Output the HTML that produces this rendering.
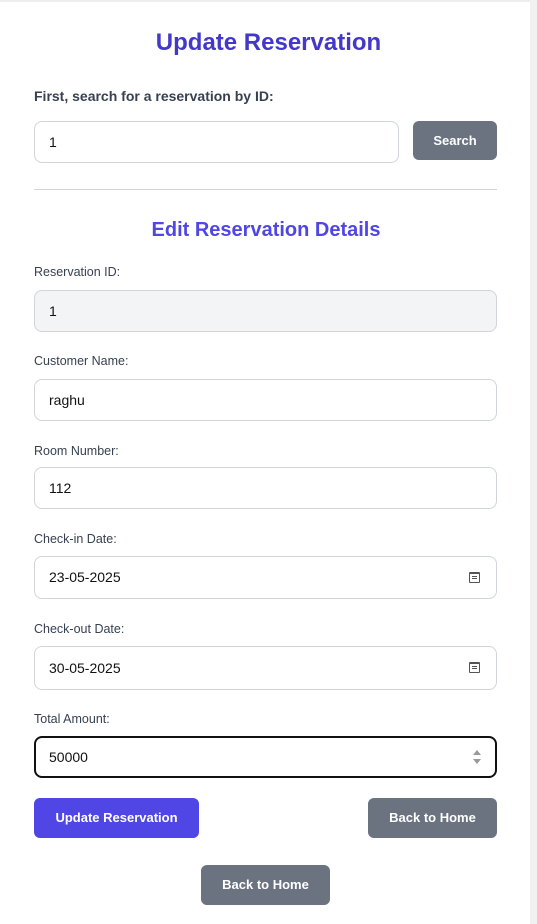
<!DOCTYPE html><html><head><style>
body{margin:0;width:537px;height:924px;background:#fff;font-family:"Liberation Sans",sans-serif;position:relative;overflow:hidden}
.sb{position:absolute;left:530px;top:0;width:7px;height:924px;background:#f1f1f1}
.top{position:absolute;left:0;top:0;width:530px;height:2px;background:#eee}
.a{position:absolute}
h1{position:absolute;left:0;width:537px;top:29px;margin:0;text-align:center;font-size:24px;color:#4338ca}
h2{position:absolute;left:0;width:532px;top:219px;margin:0;text-align:center;font-size:20px;color:#4f46e5}
.lb{position:absolute;left:34px;font-size:12.5px;color:#374151}
.in{position:absolute;left:34px;width:461px;height:40px;border:1px solid #d1d5db;border-radius:8px;box-sizing:content-box;font-size:14px;color:#111;line-height:40px;text-indent:14px}
.btn{position:absolute;height:40px;border-radius:6px;background:#6b7280;color:#fff;font-weight:bold;font-size:13px;text-align:center;line-height:40px}
.cal{position:absolute;right:16px;top:15px;width:9px;height:8px;border:1px solid #555;border-top-width:2px;border-radius:1px}
.cal:after{content:"";position:absolute;left:2px;top:2px;width:5px;height:1px;background:#555;box-shadow:0 2px 0 #555}
.sp{position:absolute;right:14px;top:12px;width:8px;height:16px}
.sp i{position:absolute;left:0;width:0;height:0;border-left:4px solid transparent;border-right:4px solid transparent}
</style></head><body>
<div class="top"></div><div class="sb"></div>
<h1>Update Reservation</h1>
<div class="a" style="left:34px;top:88px;font-size:14px;font-weight:bold;color:#374151">First, search for a reservation by ID:</div>
<div class="in" style="top:121px;width:363px">1</div>
<div class="btn" style="left:413px;top:121px;width:84px;height:39px;line-height:39px">Search</div>
<div class="a" style="left:34px;top:189px;width:463px;height:1px;background:#d1d5db"></div>
<h2>Edit Reservation Details</h2>
<div class="lb" style="top:265px">Reservation ID:</div>
<div class="in" style="top:290px;background:#f3f4f6">1</div>
<div class="lb" style="top:354px">Customer Name:</div>
<div class="in" style="top:379px">raghu</div>
<div class="lb" style="top:444px">Room Number:</div>
<div class="in" style="top:467px">112</div>
<div class="lb" style="top:532px">Check-in Date:</div>
<div class="in" style="top:556px;height:41px;line-height:41px">23-05-2025<div class="cal"></div></div>
<div class="lb" style="top:622px">Check-out Date:</div>
<div class="in" style="top:646px;height:42px;line-height:42px">30-05-2025<div class="cal"></div></div>
<div class="lb" style="top:712px">Total Amount:</div>
<div class="in" style="top:736px;left:34px;width:459px;height:38px;line-height:38px;border:2px solid #111;text-indent:13px">50000<div class="sp"><i style="top:0;border-bottom:5px solid #999"></i><i style="top:9px;border-top:5px solid #999"></i></div></div>
<div class="btn" style="left:34px;top:798px;width:165px;background:#4f46e5">Update Reservation</div>
<div class="btn" style="left:368px;top:798px;width:129px">Back to Home</div>
<div class="btn" style="left:201px;top:865px;width:129px">Back to Home</div>
</body></html>
